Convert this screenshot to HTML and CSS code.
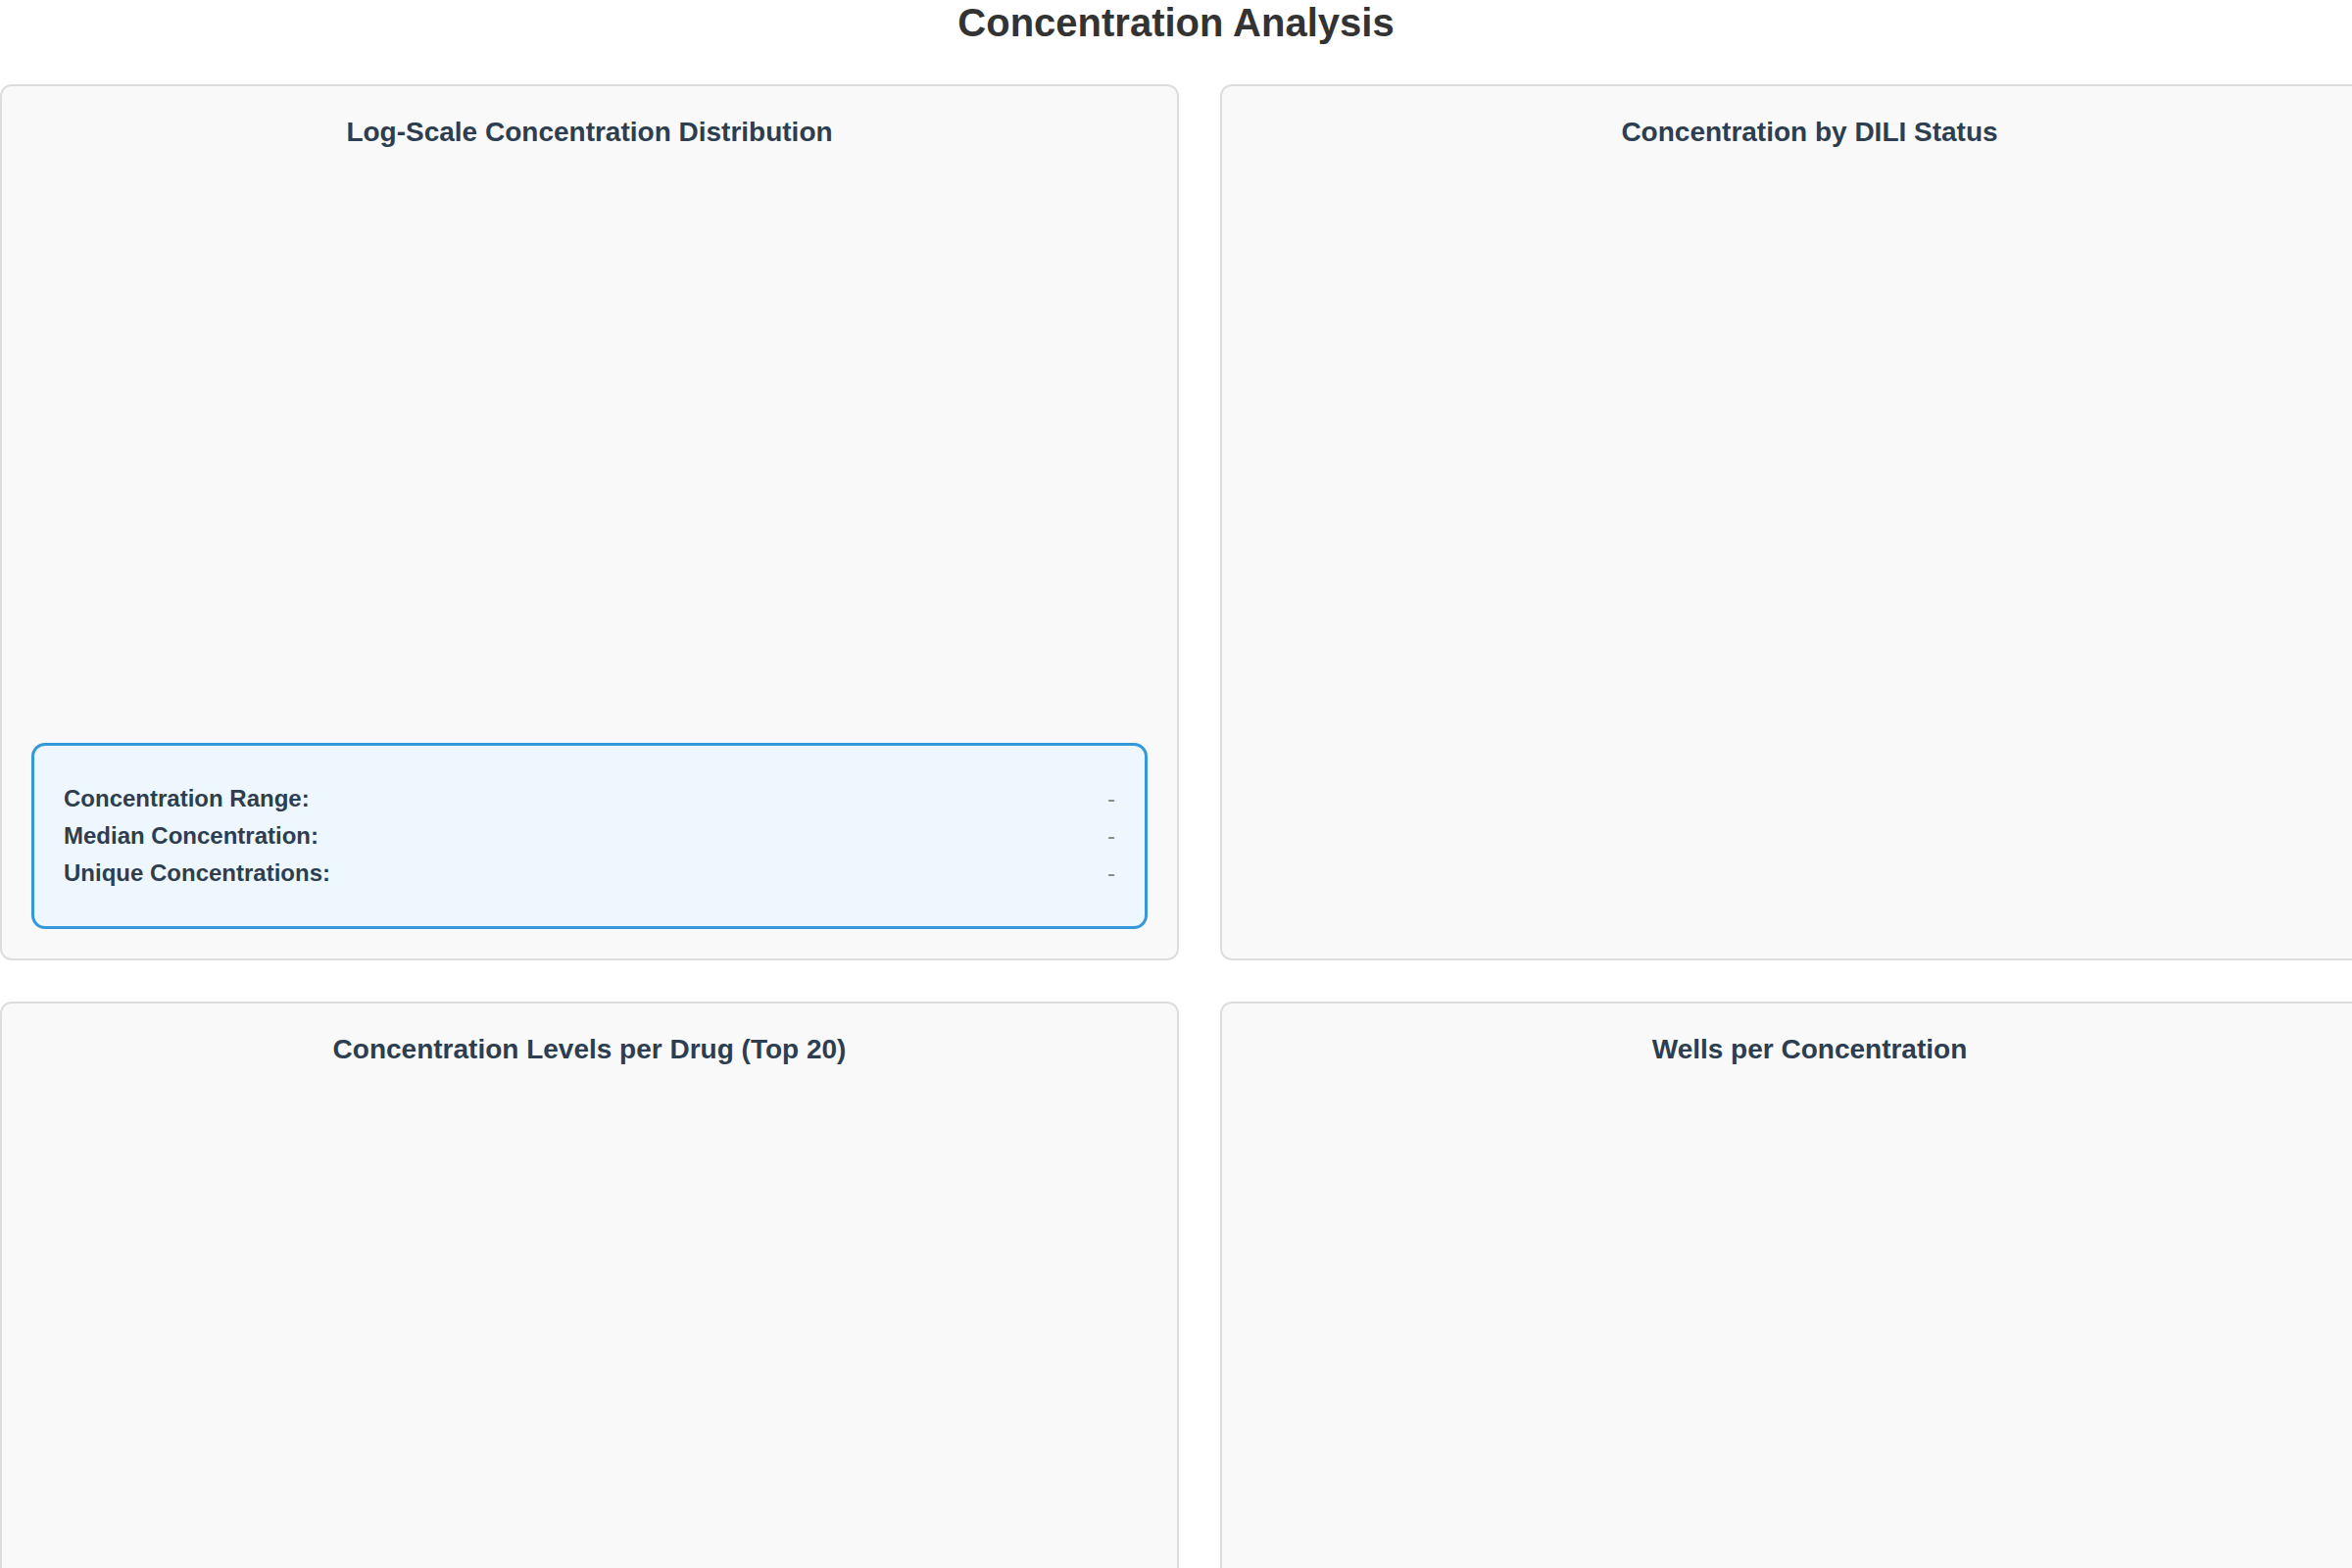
FILE: index.html
```html
<!DOCTYPE html>
<html lang="en">
<head>
<meta charset="utf-8">
<title>Concentration Analysis</title>
<link rel="stylesheet" href="styles.css">
</head>
<body>
<div class="page">
  <h1 class="page-title">Concentration Analysis</h1>
  <div class="grid">
    <section class="card">
      <h3 class="card-title">Log-Scale Concentration Distribution</h3>
      <div class="chart"></div>
      <div class="stats">
        <div class="stat-row"><span class="stat-label">Concentration Range:</span><span class="stat-value">-</span></div>
        <div class="stat-row"><span class="stat-label">Median Concentration:</span><span class="stat-value">-</span></div>
        <div class="stat-row"><span class="stat-label">Unique Concentrations:</span><span class="stat-value">-</span></div>
      </div>
    </section>
    <section class="card">
      <h3 class="card-title">Concentration by DILI Status</h3>
      <div class="chart"></div>
    </section>
    <section class="card">
      <h3 class="card-title">Concentration Levels per Drug (Top 20)</h3>
      <div class="chart chart-tall"></div>
    </section>
    <section class="card">
      <h3 class="card-title">Wells per Concentration</h3>
      <div class="chart chart-tall"></div>
    </section>
  </div>
</div>
</body>
</html>
```

FILE: styles.css
```css
html, body {
  margin: 0;
  padding: 0;
  background: #ffffff;
}

body {
  font-family: "Liberation Sans", Arial, Helvetica, sans-serif;
  color: #333333;
  overflow: hidden;
}

.page {
  width: 2448px;
}

.page-title {
  width: 2400px;
  margin: 0 0 40px 0;
  font-size: 40px;
  font-weight: bold;
  line-height: 46px;
  text-align: center;
  color: #333333;
}

.grid {
  display: grid;
  grid-template-columns: 1203px 1203px;
  column-gap: 42px;
  row-gap: 42px;
}

.card {
  background: #f9f9f9;
  border: 2px solid #dddddd;
  border-radius: 12px;
  padding: 30px;
  display: flex;
  flex-direction: column;
}

.card-title {
  margin: 0;
  font-size: 28px;
  line-height: 34px;
  font-weight: bold;
  text-align: center;
  color: #2c3e50;
}

.chart {
  height: 562px;
  margin: 24px 0 20px 0;
}

.chart-tall {
  height: 700px;
}

.stats {
  background: #eff7fe;
  border: 3px solid #3498db;
  border-radius: 14px;
  padding: 35px 30px;
}

.stat-row {
  display: flex;
  justify-content: space-between;
  font-size: 24px;
  line-height: 38px;
}

.stat-label {
  font-weight: bold;
  color: #2c3e50;
}

.stat-value {
  color: #7f8c8d;
}
```
